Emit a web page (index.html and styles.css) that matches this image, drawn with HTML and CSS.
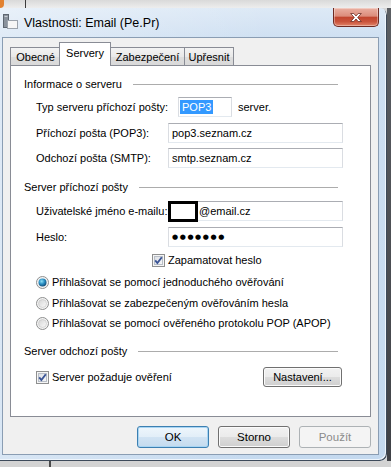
FILE: index.html
```html
<!DOCTYPE html>
<html lang="cs">
<head>
  <meta charset="UTF-8" />
  <title>Vlastnosti: Email (Pe.Pr)</title>
  <link rel="stylesheet" href="styles.css">
</head>
<body>

<svg class="defs" width="0" height="0">
  <defs>
    <linearGradient id="boxFill" x1="0" y1="0" x2="1" y2="1">
      <stop offset="0" stop-color="#dcdfe4"/>
      <stop offset="1" stop-color="#f7f8f9"/>
    </linearGradient>
    <linearGradient id="radioFill" x1="0" y1="0" x2="1" y2="1">
      <stop offset="0" stop-color="#d4d4d4"/>
      <stop offset="1" stop-color="#fbfbfb"/>
    </linearGradient>
    <radialGradient id="radioDot" cx="0.4" cy="0.35" r="0.7">
      <stop offset="0" stop-color="#8fe0f5"/>
      <stop offset="0.5" stop-color="#2a8fc4"/>
      <stop offset="1" stop-color="#12466f"/>
    </radialGradient>
  </defs>
</svg>

<div class="desk">
  <div class="backdrop-top">
    <span class="orb"></span>
    <span class="rule"></span>
  </div>

  <div class="middle">
    <div class="window">
      <div class="titlebar">
        <svg class="app-icon" viewBox="0 0 15 15" width="15" height="15">
          <rect x="0.5" y="0.5" width="5" height="13" fill="#8a929c" stroke="#5e6670"/>
          <rect x="1.5" y="2" width="3" height="1" fill="#c9ced4"/>
          <rect x="4.5" y="6.5" width="10" height="8" fill="#f6f6f6" stroke="#9ca3ac"/>
        </svg>
        <span class="title">Vlastnosti: Email (Pe.Pr)</span>
        <button class="close" title="Zavřít">
          <svg viewBox="0 0 12 9" width="12" height="9">
            <path d="M0.7 0.5 L3.8 0.5 L6 3 L8.2 0.5 L11.3 0.5 L7.7 4.5 L11.3 8.5 L8.2 8.5 L6 6 L3.8 8.5 L0.7 8.5 L4.3 4.5 Z" fill="#fff" stroke="#5b1c14" stroke-width="0.7"/>
          </svg>
        </button>
      </div>

      <div class="client">
        <div class="tabs">
          <div class="tab tab-general">Obecné</div>
          <div class="tab tab-servers active">Servery</div>
          <div class="tab tab-security">Zabezpečení</div>
          <div class="tab tab-advanced">Upřesnit</div>
        </div>

        <div class="panel">
          <div class="group g-info"><span>Informace o serveru</span></div>
          <div class="row row-type">
            <label>Typ serveru příchozí pošty:</label>
            <div class="field short"><span class="sel">POP3</span></div>
            <span class="suffix">server.</span>
          </div>
          <div class="row row-in">
            <label>Příchozí pošta (POP3):</label>
            <div class="field">pop3.seznam.cz</div>
          </div>
          <div class="row row-out">
            <label>Odchozí pošta (SMTP):</label>
            <div class="field">smtp.seznam.cz</div>
          </div>

          <div class="group g-incoming"><span>Server příchozí pošty</span></div>
          <div class="row row-user">
            <label>Uživatelské jméno e-mailu:</label>
            <div class="field user"><span class="redact"></span>@email.cz</div>
          </div>
          <div class="row row-pass">
            <label>Heslo:</label>
            <div class="field"><span class="dots">●●●●●●●</span></div>
          </div>
          <div class="option remember">
            <svg class="check" viewBox="0 0 13 13" width="13" height="13">
              <rect x="0.5" y="0.5" width="12" height="12" fill="#f5f5f5" stroke="#8e8f8f"/>
              <rect x="2.5" y="2.5" width="8" height="8" fill="url(#boxFill)" stroke="#b9bfc8"/>
              <path d="M3.2 6.3 L5.4 9 L9.8 3.2" fill="none" stroke="#3b5596" stroke-width="1.9"/>
            </svg>
            <span>Zapamatovat heslo</span>
          </div>
          <div class="option radio-a">
            <svg class="radio" viewBox="0 0 13 13" width="13" height="13">
              <circle cx="6.5" cy="6.5" r="6" fill="#f4f4f4" stroke="#8e8f8f"/>
              <circle cx="6.5" cy="6.5" r="4" fill="url(#radioDot)"/>
            </svg>
            <span>Přihlašovat se pomocí jednoduchého ověřování</span>
          </div>
          <div class="option radio-b">
            <svg class="radio" viewBox="0 0 13 13" width="13" height="13">
              <circle cx="6.5" cy="6.5" r="6" fill="#f4f4f4" stroke="#8e8f8f"/>
              <circle cx="6.5" cy="6.5" r="4" fill="url(#radioFill)" stroke="#c3c3c3" stroke-width="0.6"/>
            </svg>
            <span>Přihlašovat se zabezpečeným ověřováním hesla</span>
          </div>
          <div class="option radio-c">
            <svg class="radio" viewBox="0 0 13 13" width="13" height="13">
              <circle cx="6.5" cy="6.5" r="6" fill="#f4f4f4" stroke="#8e8f8f"/>
              <circle cx="6.5" cy="6.5" r="4" fill="url(#radioFill)" stroke="#c3c3c3" stroke-width="0.6"/>
            </svg>
            <span>Přihlašovat se pomocí ověřeného protokolu POP (APOP)</span>
          </div>

          <div class="group g-outgoing"><span>Server odchozí pošty</span></div>
          <div class="option auth">
            <svg class="check" viewBox="0 0 13 13" width="13" height="13">
              <rect x="0.5" y="0.5" width="12" height="12" fill="#f5f5f5" stroke="#8e8f8f"/>
              <rect x="2.5" y="2.5" width="8" height="8" fill="url(#boxFill)" stroke="#b9bfc8"/>
              <path d="M3.2 6.3 L5.4 9 L9.8 3.2" fill="none" stroke="#3b5596" stroke-width="1.9"/>
            </svg>
            <span>Server požaduje ověření</span>
            <button class="btn settings">Nastavení...</button>
          </div>
        </div>

        <div class="buttons">
          <button class="btn default">OK</button>
          <button class="btn">Storno</button>
          <button class="btn" disabled>Použít</button>
        </div>
      </div>
    </div>
    <div class="shade"></div>
  </div>

  <div class="backdrop-bottom">
    <span class="pole"></span>
  </div>
</div>

</body>
</html>
```

FILE: styles.css
```css
body {
  margin: 0;
  background: #d6d6d6;
  font-family: "Liberation Sans", Arial, sans-serif;
  font-size: 11px;
  color: #000;
}
.defs {
  display: block;
  width: 0;
  height: 0;
}
.desk {
  width: 391px;
  height: 467px;
  overflow: hidden;
  display: flex;
  flex-direction: column;
}

/* whatever sits behind the dialog */
.backdrop-top {
  height: 8px;
  flex: none;
  display: flex;
  background: linear-gradient(#d9d9d9, #ededed);
}
.orb {
  width: 4px;
  background: #e2812f;
  border-radius: 0 0 5px 0;
}
.rule {
  width: 1px;
  margin-left: 21px;
  background: #3c3c3c;
}
.middle {
  height: 453px;
  flex: none;
  display: flex;
}
.shade {
  flex: 1;
  background: linear-gradient(#5b5e63, #3f4146);
}
.backdrop-bottom {
  flex: 1;
  display: flex;
  background: #d3d3d3;
}
.pole {
  width: 2px;
  margin-left: 49px;
  background: #4a4a4a;
}

/* aero frame */
.window {
  width: 387px;
  flex: none;
  box-sizing: border-box;
  padding: 0 9px 7px 3px;
  display: flex;
  flex-direction: column;
  background:
    linear-gradient(90deg, rgba(255, 255, 255, 0.35), rgba(255, 255, 255, 0) 70%),
    linear-gradient(180deg, #dde9f6 0, #cfe0f2 30px, #c4d9ef 100%);
  border-radius: 0 7px 7px 0;
  box-shadow: inset -1px -1px 0 #3d4a5a, inset -2px -2px 0 #eef5fc;
}
.titlebar {
  height: 30px;
  flex: none;
  display: flex;
  align-items: flex-start;
}
.app-icon {
  margin-top: 6px;
  flex: none;
}
.title {
  margin: 7px 0 0 6px;
  line-height: 16px;
  font-size: 12.5px;
  color: #000;
}
.close {
  margin-left: auto;
  margin-right: -1px;
  width: 46px;
  height: 19px;
  padding: 0;
  display: flex;
  align-items: center;
  justify-content: center;
  border: 1px solid #6e2a22;
  border-top: none;
  border-radius: 0 0 5px 5px;
  background: linear-gradient(#eab0a2 0%, #dc8c7b 45%, #c2462f 52%, #c9533b 75%, #e28368 100%);
  box-shadow: inset 0 0 0 1px rgba(255, 255, 255, 0.35);
}

.client {
  flex: 1;
  display: flex;
  flex-direction: column;
  padding: 0 7px;
  background: #f0f0f0;
  box-shadow: 0 0 0 1px #8a9db3;
}

/* tabs */
.tabs {
  height: 27px;
  flex: none;
  box-sizing: border-box;
  padding-top: 5px;
  display: flex;
  align-items: flex-end;
}
.tab {
  height: 18px;
  box-sizing: border-box;
  border: 1px solid #898c95;
  border-bottom: none;
  background: linear-gradient(#f3f3f3, #e9e9e9 50%, #dedede 51%, #d9d9d9);
  text-align: center;
  line-height: 18px;
}
.tab-general {
  width: 51px;
}
.tab-servers {
  width: 52px;
  margin: 0 -1px 0 -2px;
}
.tab-security {
  width: 75px;
}
.tab-advanced {
  width: 50px;
  margin-left: -1px;
}
.tab.active {
  height: 24px;
  margin-bottom: -1px;
  padding-top: 2px;
  line-height: 16px;
  background: #fff;
  position: relative;
  z-index: 1;
}

.panel {
  height: 352px;
  flex: none;
  box-sizing: border-box;
  border: 1px solid #898c95;
  background: #fff;
  padding-top: 10px;
  display: flex;
  flex-direction: column;
}
.group {
  height: 16px;
  flex: none;
  display: flex;
  align-items: center;
  padding: 0 32px 0 13px;
}
.group::after {
  content: "";
  flex: 1;
  height: 1px;
  margin-left: 11px;
  background: #acacac;
}
.row {
  height: 20px;
  flex: none;
  display: flex;
  align-items: center;
  padding: 0 27px 0 25px;
}
.row label {
  width: 132px;
  flex: none;
  white-space: nowrap;
}
.row-type label {
  width: 142px;
}
.field {
  flex: 1;
  height: 20px;
  box-sizing: border-box;
  display: flex;
  align-items: center;
  padding-left: 3px;
  border: 1px solid;
  border-color: #abadb3 #dadde2 #e3e9ef #dadde2;
  background: #fff;
}
.field.short {
  flex: none;
  width: 54px;
  padding-left: 1px;
}
.sel {
  background: #3399ff;
  color: #fff;
  padding: 1px 2px;
}
.suffix {
  margin-left: 6px;
}
.field.user {
  padding-left: 0;
}
.redact {
  width: 30px;
  height: 21px;
  box-sizing: border-box;
  margin: 0 1px 0 -1px;
  border: 3px solid #000;
  background: #fff;
}
.dots {
  font-family: "DejaVu Sans", sans-serif;
  font-size: 7px;
  letter-spacing: 1.6px;
}

.option {
  height: 16px;
  flex: none;
  display: flex;
  align-items: center;
  padding-left: 25px;
}
.option svg {
  flex: none;
  margin-right: 3px;
}
.remember {
  padding-left: 141px;
}

/* vertical rhythm of the page */
.row-type { margin-top: 5px; }
.row-in { margin-top: 6px; }
.row-out { margin-top: 5px; }
.g-incoming { margin-top: 11px; }
.row-user { margin-top: 6px; }
.row-pass { margin-top: 6px; }
.remember { margin-top: 5px; }
.radio-a { margin-top: 6px; }
.radio-b { margin-top: 5px; }
.radio-c { margin-top: 4px; }
.g-outgoing { margin-top: 12px; }
.auth {
  height: 20px;
  margin-top: 8px;
  padding-right: 28px;
}

/* push buttons */
.btn {
  height: 22px;
  width: 72px;
  padding: 0;
  font-family: inherit;
  font-size: 11.5px;
  color: #000;
  border: 1px solid #707070;
  border-radius: 3px;
  background: linear-gradient(#f2f2f2 0%, #ebebeb 49%, #dddddd 50%, #cfcfcf 100%);
  box-shadow: inset 0 0 0 1px #fbfbfb;
}
.btn.settings {
  width: 79px;
  height: 20px;
  margin-left: auto;
  font-size: 11px;
}
.btn.default {
  border-color: #3c7fb1;
  background: linear-gradient(#eef6fc 0%, #e2eef8 49%, #d1e3f3 50%, #c4dbee 100%);
  box-shadow: inset 0 0 0 1px #a8d5f3;
}
.btn:disabled {
  color: #8b8b8b;
  border-color: #adb2b5;
  background: #f4f4f4;
  box-shadow: none;
}
.buttons {
  flex: none;
  display: flex;
  justify-content: flex-end;
  gap: 9px;
  margin-top: 9px;
}
```
